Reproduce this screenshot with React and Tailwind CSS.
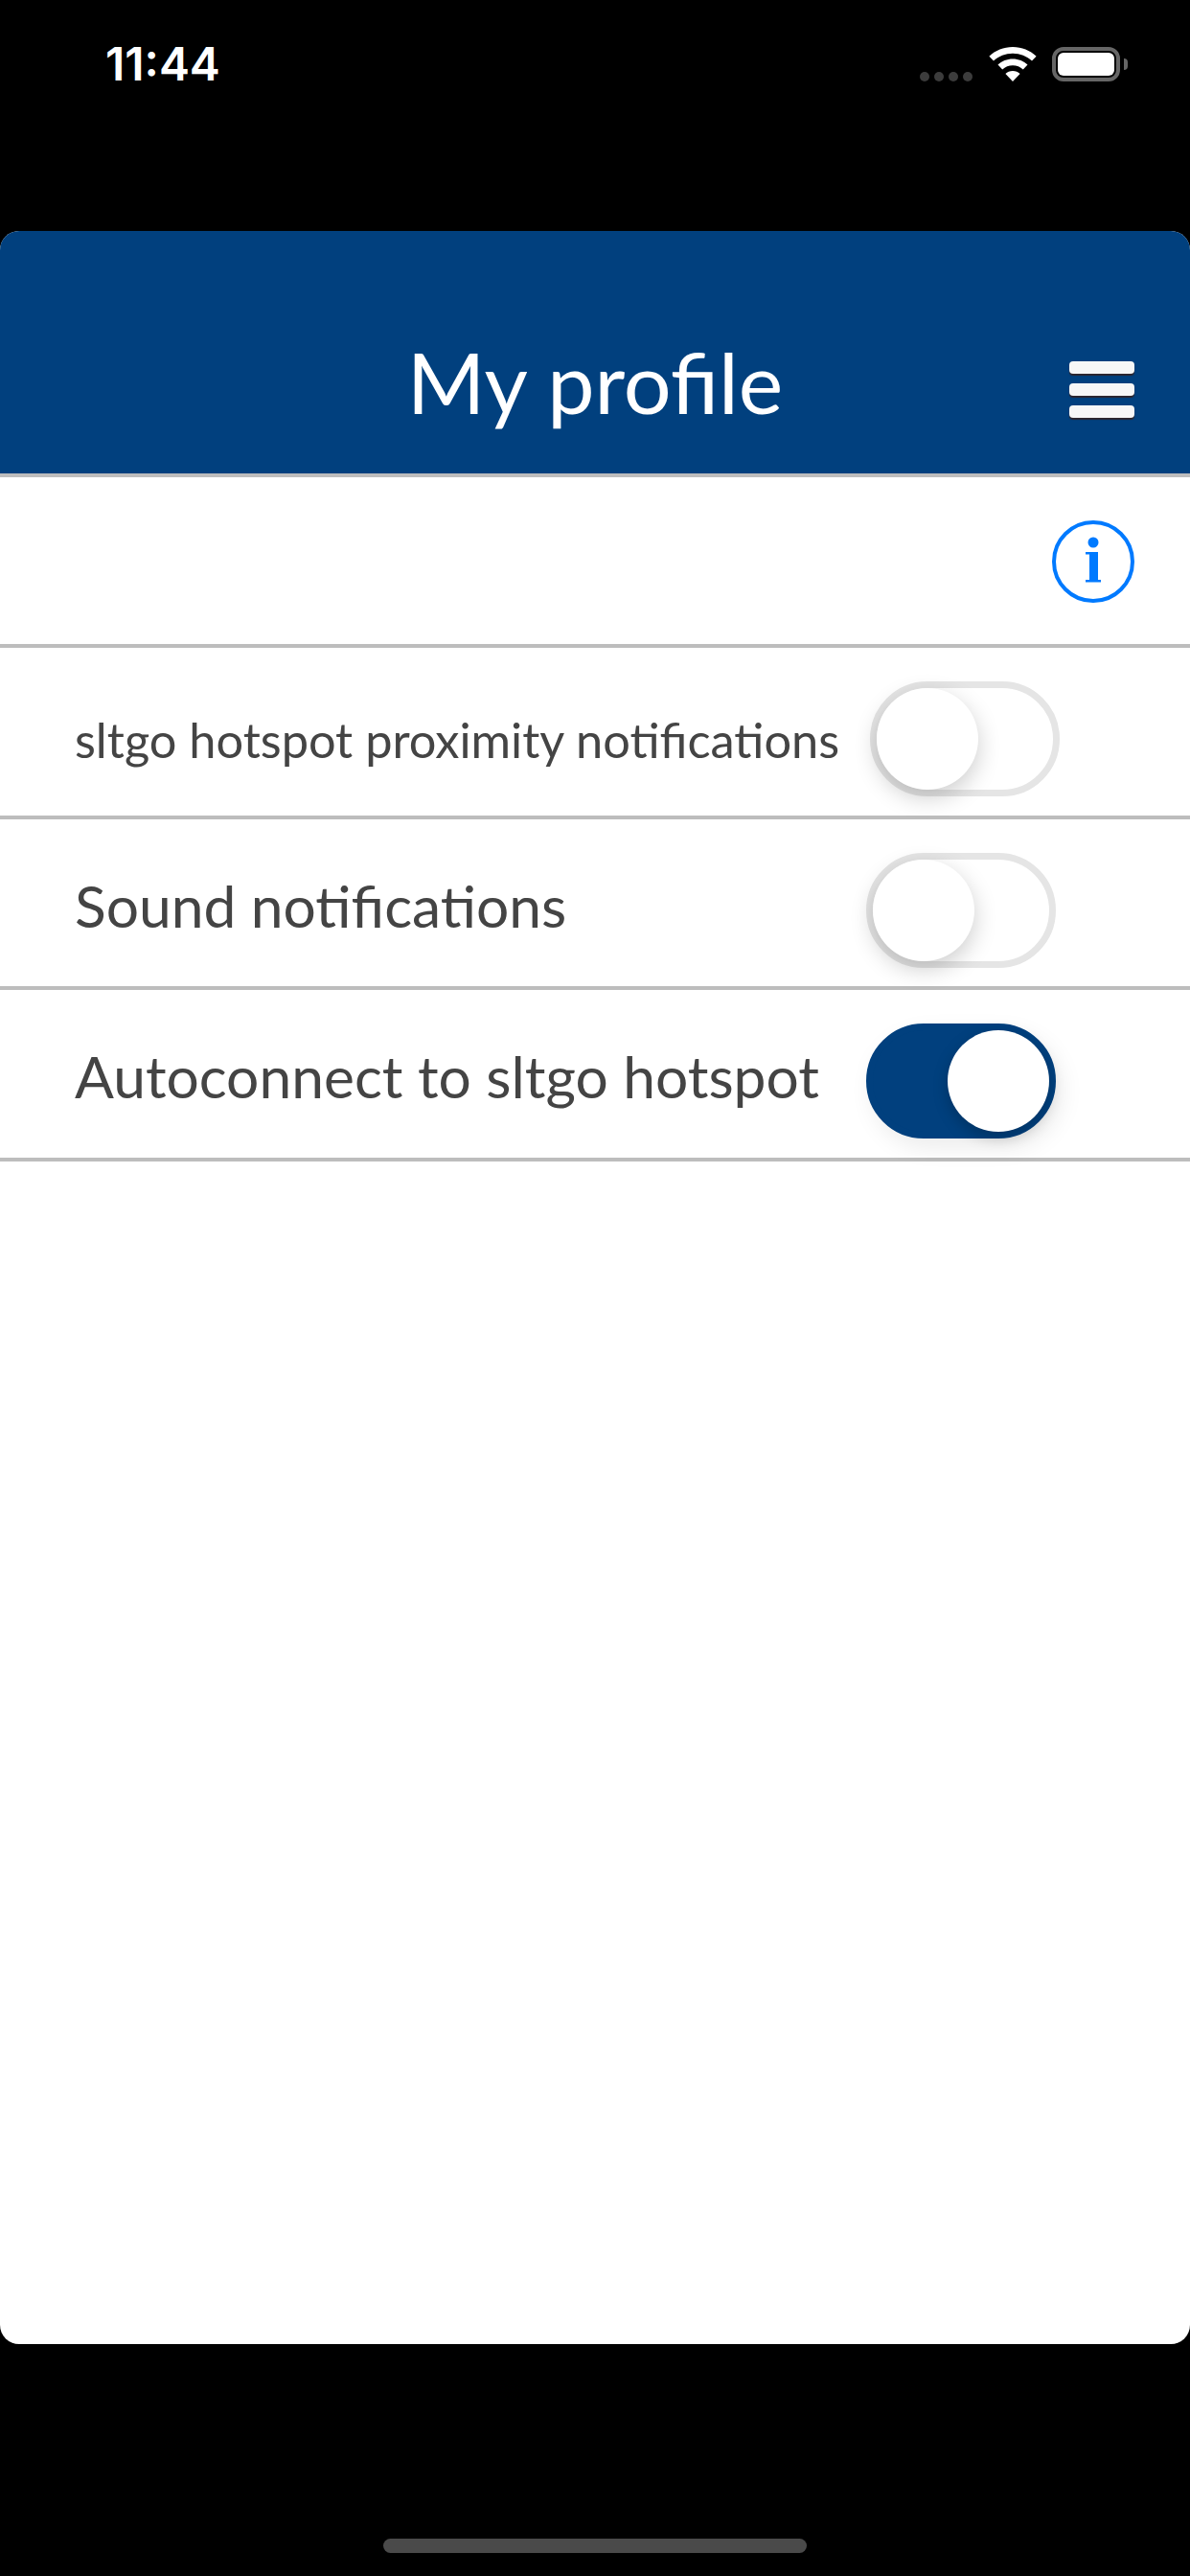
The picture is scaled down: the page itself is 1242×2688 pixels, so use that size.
import { useState } from "react";

function StatusBar() {
  return (
    <div className="h-[241px] flex items-start justify-between pl-[110px] pr-[65px] pt-[49px] text-white">
      <span className="text-[48px] leading-[36px] font-semibold font-['Inter',sans-serif]">11:44</span>
      <div className="flex items-end h-[36px]">
        <div className="flex gap-[5px] mr-[17px]">
          <span className="w-[10px] h-[10px] rounded-full bg-[#3c3c3c]" />
          <span className="w-[10px] h-[10px] rounded-full bg-[#3c3c3c]" />
          <span className="w-[10px] h-[10px] rounded-full bg-[#3c3c3c]" />
          <span className="w-[10px] h-[10px] rounded-full bg-[#3c3c3c]" />
        </div>
        <svg width="50" height="36" viewBox="0 0 50 36" className="mr-[16px]">
          <path d="M25 0C15.5 0 7 3.6.4 9.7l4.6 4.8C10.3 9.600 17.300 6.700 25 6.700s14.700 2.900 20 7.800l4.600-4.800C43 3.600 34.500 0 25 0z" fill="#fff" />
          <path d="M25 12.500c-6 0-11.400 2.300-15.500 6.100l4.700 4.800c2.900-2.600 6.700-4.200 10.800-4.200s7.900 1.600 10.800 4.200l4.700-4.800C36.400 14.800 31 12.500 25 12.500z" fill="#fff" />
          <path d="M25 25c-3 0-5.600 1.100-7.600 3L25 36l7.600-8c-2-1.900-4.600-3-7.600-3z" fill="#fff" />
        </svg>
        <div className="w-[71px] h-[36px] rounded-[12px] border-[4px] border-[#666666] p-[2px]">
          <div className="w-full h-full rounded-[6px] bg-white" />
        </div>
        <span className="w-[4px] h-[12px] mb-[12px] ml-[4px] rounded-r-[4px] bg-[#666666]" />
      </div>
    </div>
  );
}

function MenuIcon() {
  return (
    <button className="flex flex-col gap-[10px] justify-self-end mr-[58px] mt-[44px]">
      <span className="w-[68px] h-[13px] rounded-[4px] bg-[#f7f7f7] shadow-[0_2px_1px_rgba(60,30,20,0.75)]" />
      <span className="w-[68px] h-[13px] rounded-[4px] bg-[#f7f7f7] shadow-[0_2px_1px_rgba(60,30,20,0.75)]" />
      <span className="w-[68px] h-[13px] rounded-[4px] bg-[#f7f7f7] shadow-[0_2px_1px_rgba(60,30,20,0.75)]" />
    </button>
  );
}

function InfoIcon() {
  return (
    <svg width="86" height="86" viewBox="0 0 86 86" fill="#007aff">
      <circle cx="43" cy="43" r="41" fill="none" stroke="#007aff" strokeWidth="4" />
      <circle cx="43" cy="23" r="5.500" />
      <path d="M35 33h13v29h3v2.500H35V62h4V35.500h-4z" />
    </svg>
  );
}

function Toggle({ on, onChange }) {
  return (
    <button
      onClick={onChange}
      className={`w-[198px] h-[120px] mt-[16px] rounded-full border-[7px] flex items-center shrink-0 ${
        on ? "bg-[#01407e] border-[#01407e] justify-end shadow-[6px_10px_24px_rgba(0,0,0,0.08)]" : "bg-white border-[#e5e5e5] justify-start"
      }`}
    >
      <span className={`w-[106px] h-[106px] rounded-full bg-white ${on ? "shadow-[0_6px_16px_rgba(0,0,0,0.22)]" : "shadow-[0_8px_24px_rgba(0,0,0,0.2)]"}`} />
    </button>
  );
}

function SettingRow({ label, small, on, onChange, pr }) {
  return (
    <div className={`h-[178.6px] flex items-center justify-between pl-[78px] border-b-[4px] border-[#bdbdbd] ${pr}`}>
      <span className={`font-['Lato',sans-serif] text-[#444444] ${small ? "text-[50.500px] mt-[18px]" : "text-[60.500px] mt-[6px]"}`}>{label}</span>
      <Toggle on={on} onChange={onChange} />
    </div>
  );
}

export default function App() {
  const [proximity, setProximity] = useState(false);
  const [sound, setSound] = useState(false);
  const [autoconnect, setAutoconnect] = useState(true);

  return (
    <div className="w-[1242px] h-[2688px] bg-black flex flex-col overflow-hidden">
      <StatusBar />

      <div className="h-[2205px] bg-white rounded-[20px] overflow-hidden flex flex-col">
        {/* title bar */}
        <header className="h-[253px] bg-[#01407e] grid grid-cols-[1fr_auto_1fr] items-center pt-[33px] text-white">
          <span />
          <h1 className="font-['Lato',sans-serif] text-[88px] leading-none mt-[28px]">My profile</h1>
          <MenuIcon />
        </header>
        <div className="h-[4px] bg-[#bdbdbd]" />

        <div className="h-[178px] flex items-center justify-end pr-[58px] pt-[2px] border-b-[4px] border-[#bdbdbd]">
          <InfoIcon />
        </div>
        <SettingRow label="sltgo hotspot proximity notifications" small on={proximity} onChange={() => setProximity(!proximity)} pr="pr-[136px]" />
        <SettingRow label="Sound notifications" on={sound} onChange={() => setSound(!sound)} pr="pr-[140px]" />
        <SettingRow label="Autoconnect to sltgo hotspot" on={autoconnect} onChange={() => setAutoconnect(!autoconnect)} pr="pr-[140px]" />
      </div>

      {/* home indicator */}
      <div className="flex-1 flex justify-center pt-[203px]">
        <span className="w-[442px] h-[15px] rounded-full bg-[#4a4a4a]" />
      </div>
    </div>
  );
}
